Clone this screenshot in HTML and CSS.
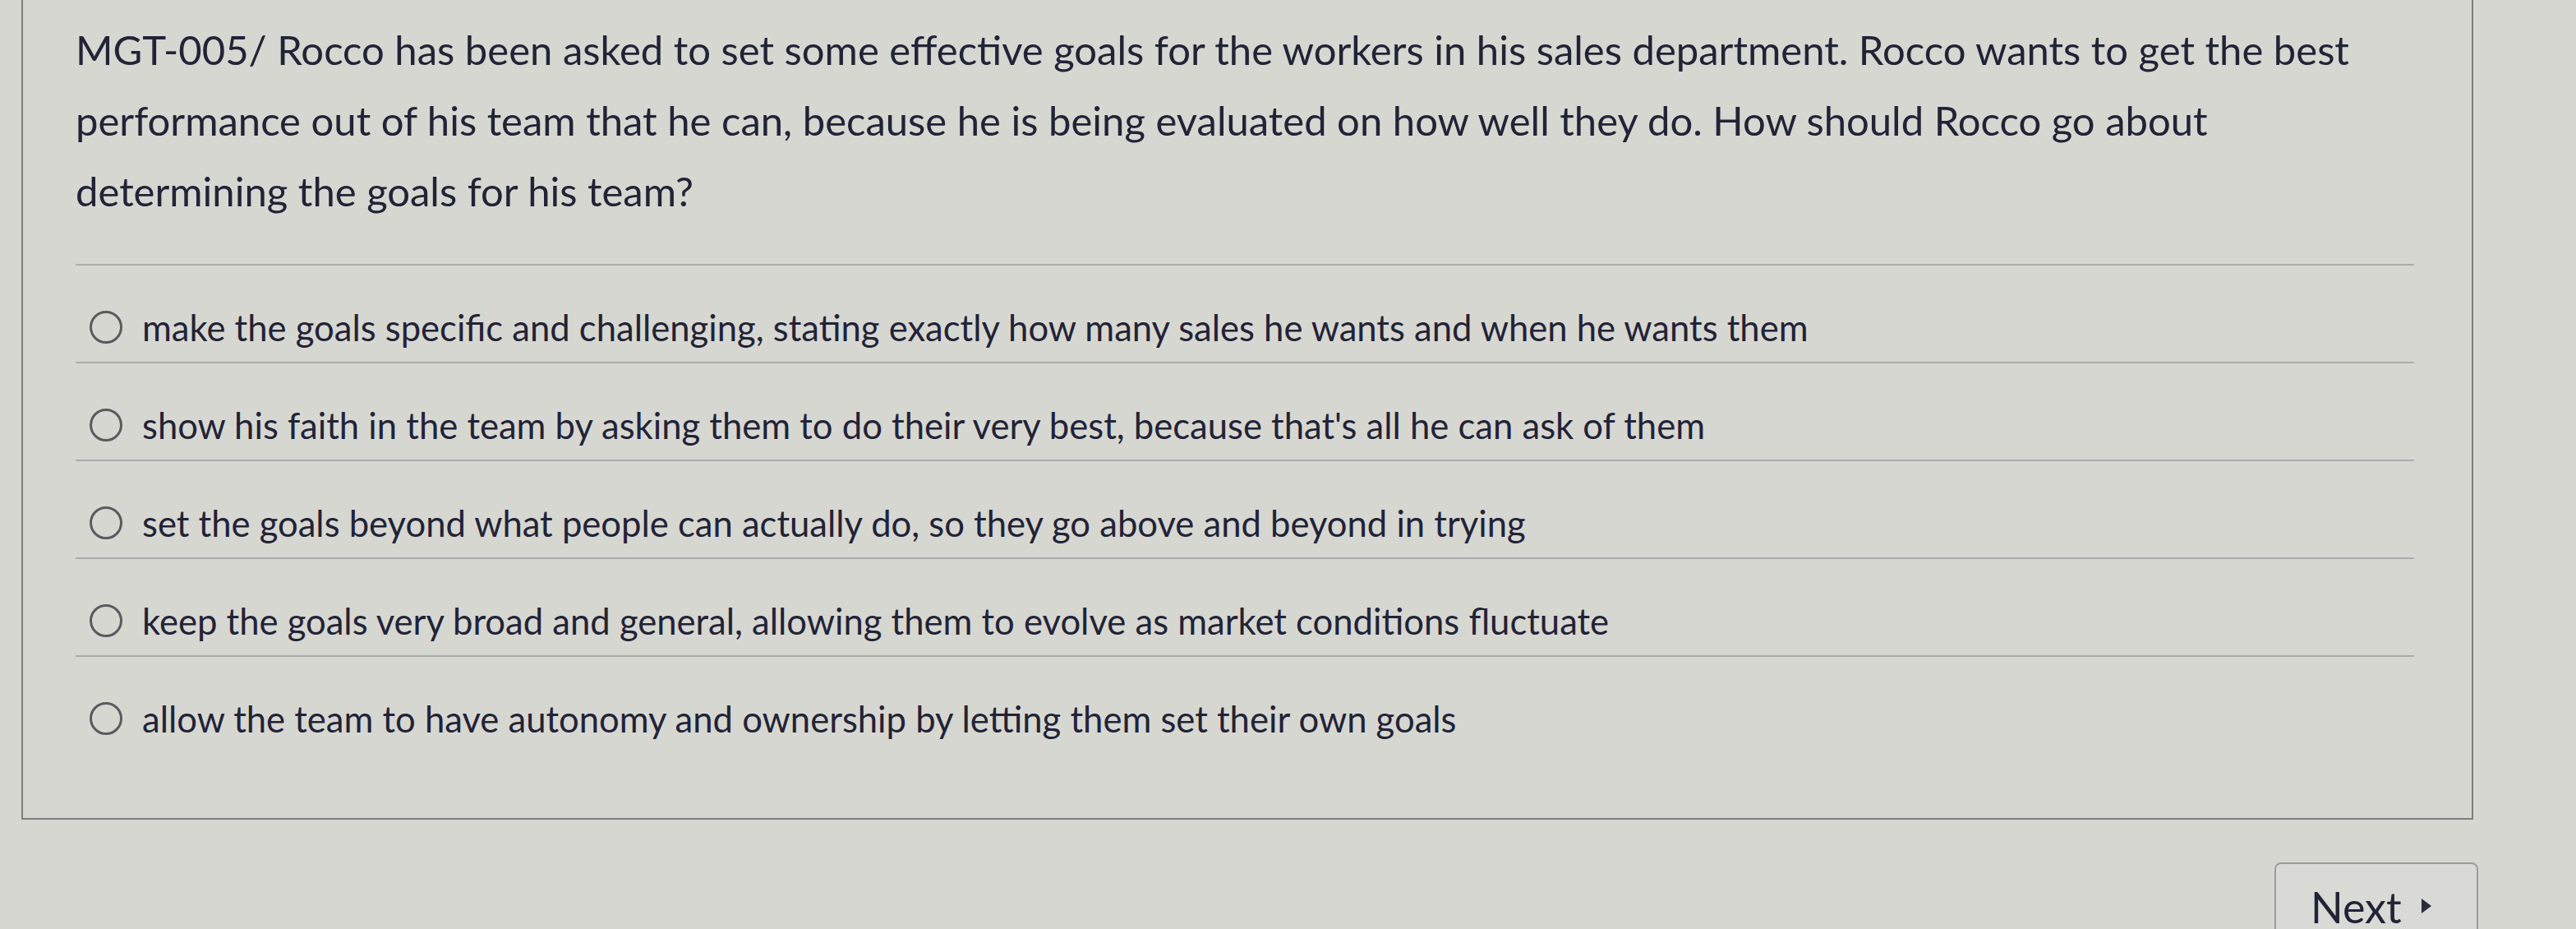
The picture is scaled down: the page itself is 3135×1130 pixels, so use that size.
FILE: index.html
```html
<!DOCTYPE html>
<html lang="en">
<head>
<meta charset="utf-8">
<title>MGT-005 Question</title>
<link rel="stylesheet" href="styles.css">
</head>
<body>
<div class="page">
  <div class="card">
    <p class="question">MGT-005/ Rocco has been asked to set some effective goals for the workers in his sales department. Rocco wants to get the best performance out of his team that he can, because he is being evaluated on how well they do. How should Rocco go about determining the goals for his team?</p>
    <ul class="options">
      <li class="option"><span class="radio"></span><span class="label">make the goals specific and challenging, stating exactly how many sales he wants and when he wants them</span></li>
      <li class="option"><span class="radio"></span><span class="label">show his faith in the team by asking them to do their very best, because that's all he can ask of them</span></li>
      <li class="option"><span class="radio"></span><span class="label">set the goals beyond what people can actually do, so they go above and beyond in trying</span></li>
      <li class="option"><span class="radio"></span><span class="label">keep the goals very broad and general, allowing them to evolve as market conditions fluctuate</span></li>
      <li class="option"><span class="radio"></span><span class="label">allow the team to have autonomy and ownership by letting them set their own goals</span></li>
    </ul>
  </div>
  <div class="actions">
    <button class="next" type="button">Next<span class="tri"></span></button>
  </div>
</div>
</body>
</html>
```

FILE: styles.css
```css
html, body {
  margin: 0;
  padding: 0;
}

body {
  background: #d7d7d2;
  color: #222336;
  font-family: Lato, "Open Sans", "Liberation Sans", sans-serif;
  overflow: hidden;
}

.page {
  padding-left: 26px;
  width: 2990px;
}

.card {
  width: 2984px;
  box-sizing: border-box;
  border: 2px solid #7d7d7d;
  border-top: none;
  padding: 17px 70px 79px 64px;
}

.question {
  margin: 0;
  font-size: 49px;
  line-height: 86px;
  padding-bottom: 46px;
  border-bottom: 2px solid #ababab;
}

.options {
  list-style: none;
  margin: 0;
  padding: 0;
}

.option {
  display: flex;
  align-items: center;
  padding: 51px 0 18px;
  border-bottom: 2px solid #ababab;
  font-size: 43.6px;
  line-height: 48px;
}

.option:last-child {
  border-bottom: none;
}

.radio {
  flex: none;
  width: 34px;
  height: 34px;
  margin-left: 17px;
  border: 3px solid #5a5a5f;
  border-radius: 50%;
}

.label {
  margin-left: 24px;
}

.actions {
  display: flex;
  justify-content: flex-end;
  padding-top: 52px;
}

.next {
  display: flex;
  align-items: flex-start;
  align-self: flex-start;
  width: 248px;
  height: 130px;
  box-sizing: border-box;
  padding: 22px 0 0 42px;
  background: #d9d9d5;
  border: 2px solid #9c9c9c;
  border-radius: 8px;
  color: #222336;
  font-family: Lato, "Open Sans", "Liberation Sans", sans-serif;
  font-size: 52px;
  line-height: 60px;
}

.tri {
  display: inline-block;
  width: 0;
  height: 0;
  margin: 20px 0 0 24px;
  border-top: 9px solid transparent;
  border-bottom: 9px solid transparent;
  border-left: 12px solid #2a2b3b;
}
```
